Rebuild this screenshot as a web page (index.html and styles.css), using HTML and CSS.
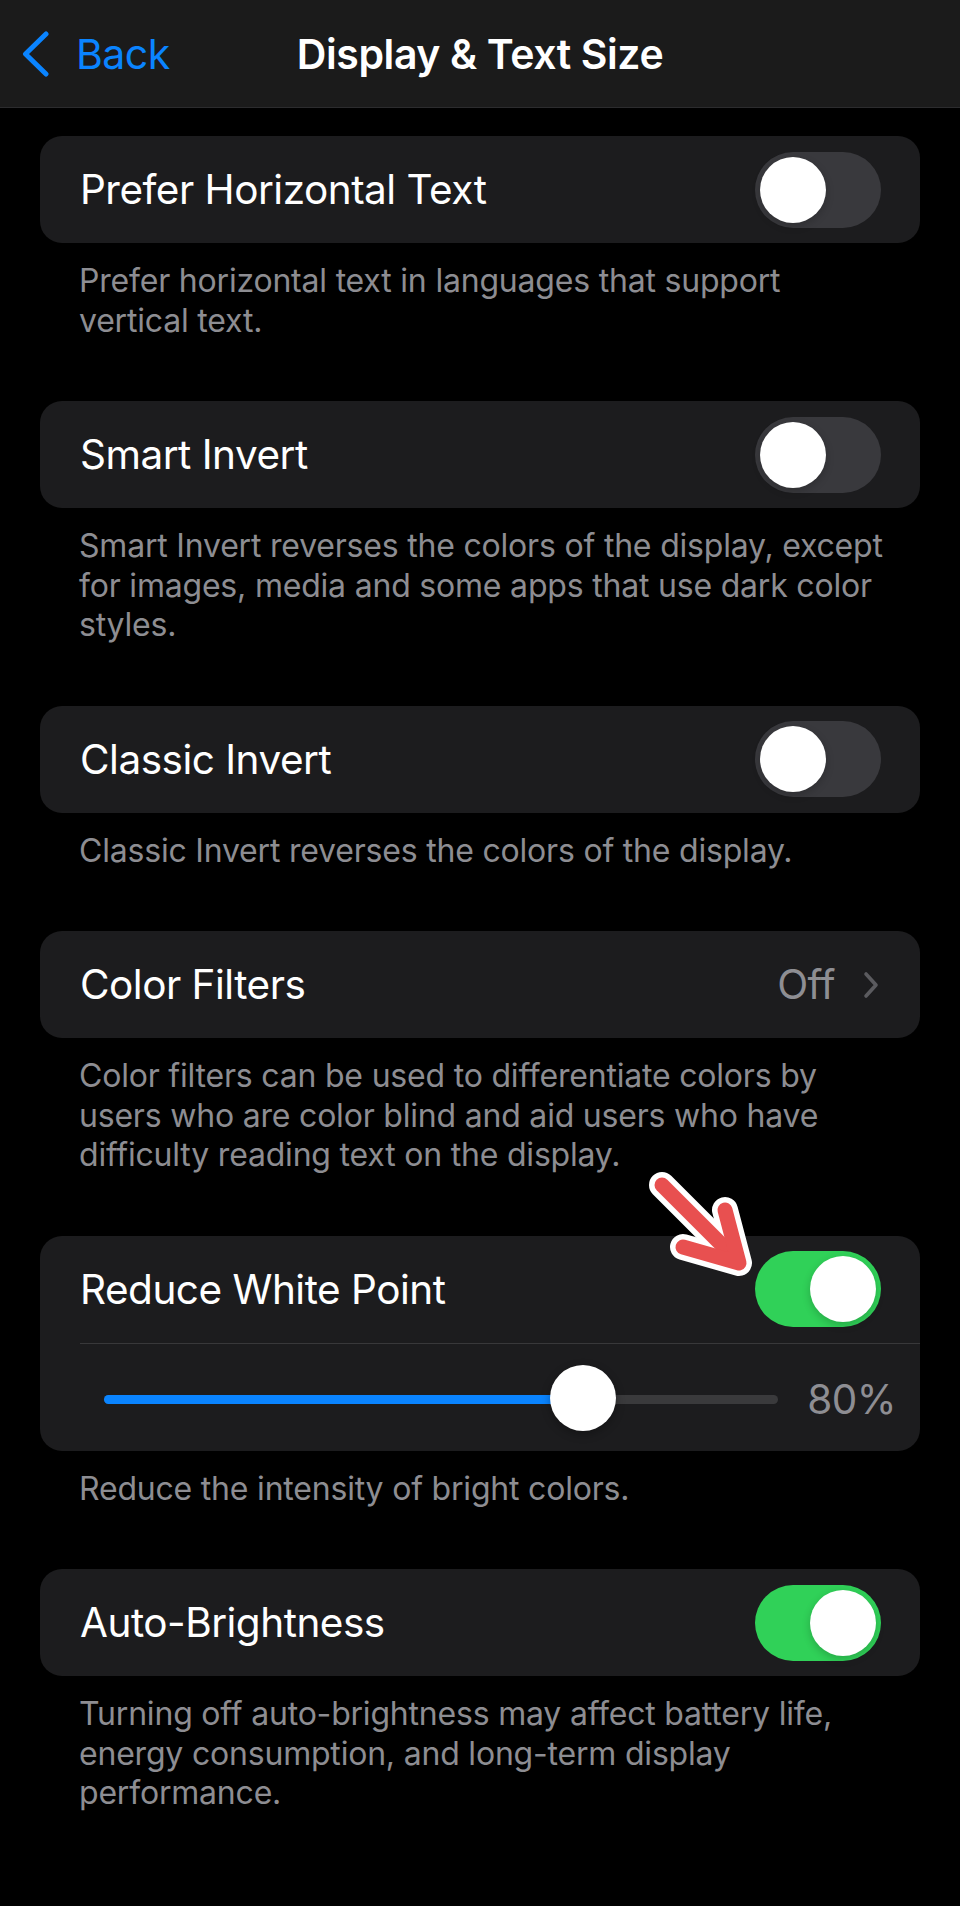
FILE: index.html
```html
<!DOCTYPE html>
<html lang="en">

<head>
  <meta charset="UTF-8">
  <meta name="viewport" content="width=device-width, initial-scale=1.0">
  <title>Display &amp; Text Size</title>
  <link rel="stylesheet" href="styles.css">
</head>

<body>
  <header class="nav-bar">
    <a class="back" href="#">
      <svg class="back-chevron" width="30" height="46" viewBox="0 0 30 46">
        <path d="M25 3 L4.5 23 L25 43" fill="none" stroke="#0a84ff" stroke-width="5" stroke-linecap="round" stroke-linejoin="round" />
      </svg>
      <span>Back</span>
    </a>
    <h1 class="title">Display &amp; Text Size</h1>
    <span></span>
  </header>

  <main class="settings">
    <section class="group">
      <div class="card">
        <div class="row">
          <span class="label">Prefer Horizontal Text</span>
          <span class="switch"><span class="knob"></span></span>
        </div>
      </div>
      <p class="footnote">Prefer horizontal text in languages that support vertical text.</p>
    </section>

    <section class="group">
      <div class="card">
        <div class="row">
          <span class="label">Smart Invert</span>
          <span class="switch"><span class="knob"></span></span>
        </div>
      </div>
      <p class="footnote">Smart Invert reverses the colors of the display, except for images, media and some apps that use dark color styles.</p>
    </section>

    <section class="group">
      <div class="card">
        <div class="row">
          <span class="label">Classic Invert</span>
          <span class="switch"><span class="knob"></span></span>
        </div>
      </div>
      <p class="footnote">Classic Invert reverses the colors of the display.</p>
    </section>

    <section class="group">
      <div class="card">
        <div class="row">
          <span class="label">Color Filters</span>
          <span class="detail">
            <span class="value">Off</span>
            <svg class="disclosure" width="18" height="30" viewBox="0 0 18 30">
              <path d="M4 4 L14 15 L4 26" fill="none" stroke="#5b5b5f" stroke-width="3.6" stroke-linecap="round" stroke-linejoin="round" />
            </svg>
          </span>
        </div>
      </div>
      <p class="footnote">Color filters can be used to differentiate colors by users who are color blind and aid users who have difficulty reading text on the display.</p>
    </section>

    <section class="group">
      <div class="card">
        <div class="row">
          <span class="label">Reduce White Point</span>
          <span class="switch on"><span class="knob"></span></span>
        </div>
        <div class="separator"></div>
        <div class="slider-row">
          <div class="slider">
            <div class="slider-fill" style="width: 71%"></div>
            <span class="slider-knob"></span>
          </div>
          <span class="slider-value">80%</span>
        </div>
        <!-- red pointer drawn on top of the toggle -->
        <svg class="pointer" width="112" height="122" viewBox="0 0 112 122">
          <g fill="none" stroke-linecap="round" stroke-linejoin="round">
            <g stroke="#ffffff" stroke-width="26">
              <path d="M13 18 L86 91" />
              <path d="M76 43 L90 96 L34 80" />
            </g>
            <g stroke="#e85050" stroke-width="15">
              <path d="M13 18 L86 91" />
              <path d="M76 43 L90 96 L34 80" />
            </g>
          </g>
        </svg>
      </div>
      <p class="footnote">Reduce the intensity of bright colors.</p>
    </section>

    <section class="group">
      <div class="card">
        <div class="row">
          <span class="label">Auto-Brightness</span>
          <span class="switch on"><span class="knob"></span></span>
        </div>
      </div>
      <p class="footnote">Turning off auto-brightness may affect battery life, energy consumption, and long-term display performance.</p>
    </section>
  </main>
</body>

</html>
```

FILE: styles.css
```css
/* page */
body {
  margin: 0;
  background-color: #000;
  color: #fff;
  font-family: Inter, "Noto Sans", sans-serif;
  -webkit-font-smoothing: antialiased;
}

/* top navigation bar */
.nav-bar {
  height: 107px;
  background-color: #1b1b1b;
  border-bottom: 1px solid #2c2c2e;
  display: grid;
  grid-template-columns: 1fr auto 1fr;
  align-items: center;
}

.back {
  display: flex;
  align-items: center;
  gap: 25px;
  padding-left: 21px;
  color: #0a84ff;
  text-decoration: none;
  font-size: 41px;
  letter-spacing: -0.5px;
}

.back-chevron {
  display: block;
}

.title {
  margin: 0;
  font-size: 41px;
  font-weight: 600;
  letter-spacing: -0.4px;
}

/* grouped list */
.settings {
  padding-top: 28px;
}

.group {
  margin-bottom: 61px;
}

.card {
  position: relative;
  margin: 0 40px;
  background-color: #1c1c1e;
  border-radius: 22px;
}

.row {
  height: 107px;
  padding: 0 39px 0 40px;
  display: flex;
  align-items: center;
  justify-content: space-between;
}

.label {
  font-size: 40.5px;
  letter-spacing: -0.5px;
}

.footnote {
  margin: 0;
  padding: 18px 65px 0 79px;
  font-size: 32px;
  line-height: 39.5px;
  letter-spacing: -0.2px;
  color: #8d8d92;
}

/* toggle switch */
.switch {
  width: 126px;
  height: 76px;
  border-radius: 38px;
  background-color: #39393d;
  display: flex;
  align-items: center;
  padding: 0 5px;
  box-sizing: border-box;
}

.switch.on {
  background-color: #30d158;
  justify-content: flex-end;
}

.knob {
  width: 66px;
  height: 66px;
  border-radius: 50%;
  background-color: #fff;
  box-shadow: 0 3px 8px rgba(0, 0, 0, 0.2);
}

/* disclosure value */
.detail {
  display: flex;
  align-items: center;
  gap: 27px;
  margin-right: 1px;
}

.value {
  font-size: 40.5px;
  letter-spacing: -0.5px;
  color: #8e8e93;
}

.disclosure {
  display: block;
}

/* slider */
.separator {
  height: 1px;
  margin-left: 40px;
  background-color: #38383a;
}

.slider-row {
  height: 102px;
  padding: 5px 24px 0 64px;
  display: flex;
  align-items: center;
}

.slider {
  position: relative;
  flex: 1;
  height: 9px;
  border-radius: 5px;
  background-color: #3a3a3c;
  margin-right: 29px;
}

.slider-fill {
  height: 100%;
  border-radius: 5px;
  background-color: #0a84ff;
}

.slider-knob {
  position: absolute;
  top: 50%;
  left: 71%;
  width: 66px;
  height: 66px;
  margin: -35px 0 0 -33px;
  border-radius: 50%;
  background-color: #fff;
  box-shadow: 0 3px 10px rgba(0, 0, 0, 0.3);
}

.slider-value {
  font-size: 40.5px;
  letter-spacing: -0.5px;
  color: #8e8e93;
}

/* annotation arrow */
.pointer {
  position: absolute;
  top: -69px;
  left: 609px;
}
```
